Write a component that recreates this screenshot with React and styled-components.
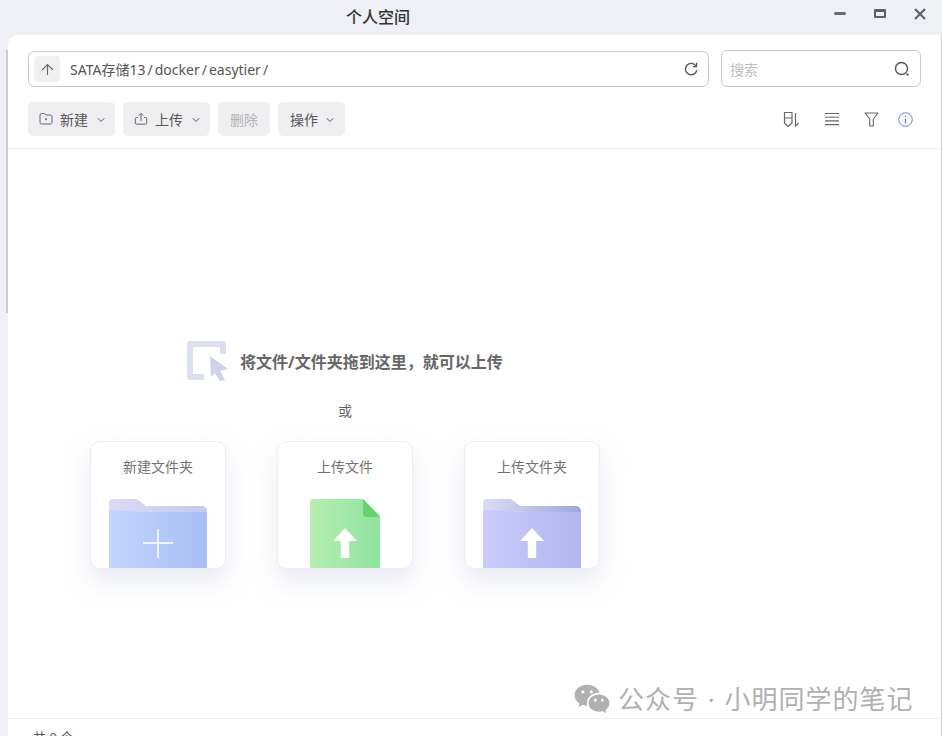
import React from 'react';
import styled, { createGlobalStyle } from 'styled-components';
import { ArrowUp, ChevronDown } from 'lucide-react';
import { RiWechatFill } from 'react-icons/ri';

const GlobalStyle = createGlobalStyle`
  html, body {
    margin: 0;
    padding: 0;
    background: #eef0f5;
    overflow: hidden;
  }
  * {
    box-sizing: border-box;
  }
`;

const Page = styled.div`
  position: relative;
  width: 942px;
  height: 736px;
  overflow: hidden;
  background: #eef0f5;
  font-family: "Noto Sans", "Noto Sans CJK SC", sans-serif;
  color: #555;
`;

const TitleBar = styled.div`
  display: flex;
  align-items: center;
  height: 35px;
  padding: 0 16px 4px 346px;
`;

const Title = styled.div`
  font-size: 16px;
  font-weight: 500;
  color: #333;
`;

const WindowControls = styled.div`
  display: flex;
  align-items: center;
  gap: 28px;
  margin-left: auto;
  margin-bottom: 4px;
`;

const Minimize = styled.span`
  width: 12px;
  height: 3px;
  border-radius: 2px;
  background: #666a72;
`;

const Maximize = styled.span`
  width: 12px;
  height: 9px;
  border: 2px solid #5c6068;
  border-top-width: 3px;
  border-radius: 1px;
`;

const EdgeScroll = styled.div`
  position: absolute;
  left: 6px;
  top: 50px;
  width: 2px;
  height: 263px;
  background: #cbccd1;
`;

const AppWindow = styled.div`
  display: flex;
  flex-direction: column;
  height: 701px;
  margin: 0 0 0 8px;
  background: #fff;
  border-top-left-radius: 10px;
  border-right: 1px solid #d4d4d8;
`;

const Header = styled.div`
  height: 114px;
  padding: 15px 20px 0;
  border-bottom: 1px solid #f0f0f2;
`;

const TopRow = styled.div`
  display: flex;
  align-items: center;
  gap: 12px;
`;

const AddressBar = styled.div`
  display: flex;
  align-items: center;
  width: 681px;
  height: 36px;
  padding: 0 10px 0 5px;
  border: 1px solid #c9cacd;
  border-radius: 6px;
  margin-top: 1px;
`;

const UpButton = styled.div`
  display: flex;
  align-items: center;
  justify-content: center;
  width: 26px;
  height: 26px;
  border-radius: 4px;
  background: #eff0f0;
  color: #666;
`;

const Path = styled.div`
  flex: 1;
  margin-left: 10px;
  font-size: 14px;
  word-spacing: -1.6px;
  color: #555;
`;

const SearchBox = styled.div`
  display: flex;
  align-items: center;
  justify-content: space-between;
  width: 200px;
  height: 37px;
  padding: 0 10px 0 8px;
  border: 1px solid #c9cacd;
  border-radius: 6px;
  font-size: 14px;
  color: #bdbdbd;
`;

const ActionRow = styled.div`
  display: flex;
  align-items: center;
  gap: 8px;
  margin-top: 15px;
`;

const ActionButton = styled.div`
  display: flex;
  align-items: center;
  gap: ${(p) => p.$gap}px;
  width: ${(p) => p.$width}px;
  height: 34px;
  padding-left: ${(p) => p.$pad}px;
  border-radius: 5px;
  background: #efeff1;
  font-size: 14px;
  color: ${(p) => (p.$disabled ? '#b4b4b6' : '#555')};
`;

const Caret = styled(ChevronDown)`
  margin-top: 2px;
  color: #444;
`;

const ViewTools = styled.div`
  display: flex;
  align-items: center;
  gap: 25px;
  margin-left: auto;
  margin-right: 8px;
`;

const InfoSvg = styled.svg`
  margin-left: -6px;
`;

const Empty = styled.div`
  flex: 1;
  width: 510px;
  margin-left: 82px;
  padding-top: 192px;
`;

const DropHint = styled.div`
  display: flex;
  align-items: center;
  gap: 12px;
  margin-left: 97px;
  font-size: 16px;
  font-weight: 700;
  color: #666;
`;

const OrText = styled.div`
  margin-top: 19px;
  text-align: center;
  font-size: 14px;
  color: #666;
`;

const CardRow = styled.div`
  display: flex;
  gap: 51px;
  margin-top: 21px;
`;

const Card = styled.div`
  display: flex;
  flex-direction: column;
  align-items: center;
  width: 136px;
  height: 128px;
  padding-top: 14px;
  border: 1px solid #eeeef2;
  border-radius: 10px;
  background: #fff;
  box-shadow: 0 12px 24px rgba(190, 198, 222, 0.36);
  overflow: hidden;
  font-size: 14px;
  color: #727272;
`;

const CardArt = styled.svg`
  display: block;
  margin-top: auto;
  margin-bottom: -1px;
`;

const Footer = styled.div`
  height: 18px;
  padding: 9px 0 0 25px;
  border-top: 1px solid #eeeef0;
  font-size: 13px;
  line-height: 18px;
  color: #555;
`;

const Watermark = styled.div`
  position: absolute;
  left: 573px;
  top: 680px;
  display: flex;
  align-items: center;
  gap: 7px;
  font-size: 26px;
  letter-spacing: 1px;
  word-spacing: 1px;
  line-height: 34px;
  color: #b0b0b0;
  white-space: nowrap;
`;

const CloseIcon = () => (
  <svg width="12" height="12" viewBox="0 0 12 12" fill="none" stroke="#5c6068" strokeWidth="2.1">
    <path d="M1 1 L11 11 M11 1 L1 11" />
  </svg>
);

const RefreshIcon = () => (
  <svg width="14" height="14" viewBox="0 0 14 14" fill="none" stroke="#555" strokeWidth="1.4">
    <path d="M12 4 A5.7 5.7 0 1 0 12.8 8" />
    <path d="M12.6 0.8 V4.6 H8.8" strokeWidth="1.2" />
  </svg>
);

const SearchIcon = () => (
  <svg width="16" height="16" viewBox="0 0 16 16" fill="none" stroke="#555" strokeWidth="1.4">
    <circle cx="7.5" cy="7.5" r="6" />
    <path d="M12.6 12.6 L14.4 14.4" strokeWidth="1.6" />
  </svg>
);

const NewFolderIcon = () => (
  <svg width="14" height="14" viewBox="0 0 14 14" fill="none" stroke="#666" strokeWidth="1">
    <path d="M1 3 a1.5 1.5 0 0 1 1.5-1.5 H5.5 L7 3 H11.5 A1.5 1.5 0 0 1 13 4.5 V10.5 A1.5 1.5 0 0 1 11.5 12 H2.5 A1.5 1.5 0 0 1 1 10.5 Z" />
    <path d="M7 6.2 V8.2 M6 7.2 H8" />
  </svg>
);

const UploadIcon = () => (
  <svg width="14" height="14" viewBox="0 0 14 14" fill="none" stroke="#666" strokeWidth="1">
    <path d="M4 5.5 H2.5 A1.2 1.2 0 0 0 1.3 6.7 V11 A1.2 1.2 0 0 0 2.5 12.2 H11.5 A1.2 1.2 0 0 0 12.7 11 V6.7 A1.2 1.2 0 0 0 11.5 5.5 H10" />
    <path d="M7 9 V1.5 M4.8 3.6 L7 1.4 L9.2 3.6" />
  </svg>
);

const SortIcon = () => (
  <svg width="17" height="17" viewBox="0 0 17 17" fill="none" stroke="#666" strokeWidth="1.2">
    <path d="M1.5 1.5 H9 V12 L5.2 15.5 L1.5 12 Z M1.5 7 H9" />
    <path d="M12.5 2 V15 L15.5 12" />
  </svg>
);

const ListIcon = () => (
  <svg width="14" height="14" viewBox="0 0 14 14" fill="none" stroke="#666" strokeWidth="1.1">
    <path d="M0 1.5 H14 M0 5.2 H14 M0 8.9 H14 M0 12.6 H14" />
  </svg>
);

const FilterIcon = () => (
  <svg width="15" height="15" viewBox="0 0 15 15" fill="none" stroke="#666" strokeWidth="1.1">
    <path d="M1 1 H14 L9.3 7 V14 H5.7 V7 Z" strokeLinejoin="round" />
  </svg>
);

const InfoIcon = () => (
  <InfoSvg width="15" height="15" viewBox="0 0 15 15" fill="none" stroke="#6f7fd8" strokeWidth="1">
    <circle cx="7.5" cy="7.5" r="6.8" />
    <path d="M7.5 6.5 V11.5" strokeWidth="1.4" />
    <circle cx="7.5" cy="4.3" r="0.8" fill="#6f7fd8" stroke="none" />
  </InfoSvg>
);

const DropIcon = () => (
  <svg width="41" height="40" viewBox="0 0 41 40">
    <path d="M3 0 H36 A3 3 0 0 1 39 3 V13 H33 V6 H6 V33 H17 V39 H3 A3 3 0 0 1 0 36 V3 A3 3 0 0 1 3 0 Z" fill="#dcdff0" />
    <path d="M23 15 L41 28 L33 30 L38 39 L33 40 L28 32 L24 36 Z" fill="#cfd2e8" />
  </svg>
);

const FolderArt = ({ id, tabFrom, tabTo, from, to, children }) => (
  <CardArt width="98" height="70" viewBox="0 0 98 70">
    <defs>
      <linearGradient id={`${id}-tab`} x1="0" x2="1" y1="0" y2="0">
        <stop offset="0" stopColor={tabFrom} />
        <stop offset="1" stopColor={tabTo} />
      </linearGradient>
      <linearGradient id={`${id}-body`} x1="0" x2="1" y1="0" y2="0">
        <stop offset="0" stopColor={from} />
        <stop offset="1" stopColor={to} />
      </linearGradient>
    </defs>
    <path d="M0 14 V4 A4 4 0 0 1 4 0 H27 A4 4 0 0 1 30 1.5 L37 7 H93 A5 5 0 0 1 98 12 V30 H0 Z" fill={`url(#${id}-tab)`} />
    <path d="M0 13 A2 2 0 0 1 2 11 L34 13 H98 V70 H0 Z" fill={`url(#${id}-body)`} />
    {children}
  </CardArt>
);

const WhiteArrow = ({ x }) => (
  <path d={`M${x} 29 L${x + 12} 42 H${x + 4.2} V59 H${x - 4.2} V42 H${x - 12} Z`} fill="#fff" />
);

const FileArt = () => (
  <CardArt width="70" height="70" viewBox="0 0 70 70">
    <defs>
      <linearGradient id="file-body" x1="0" x2="1" y1="0" y2="0">
        <stop offset="0" stopColor="#b6eeb0" />
        <stop offset="1" stopColor="#8fe3a2" />
      </linearGradient>
    </defs>
    <path d="M3 0 H53 L70 17 V70 H0 V3 A3 3 0 0 1 3 0 Z" fill="url(#file-body)" />
    <path d="M53 0 L70 18 H57 A4 4 0 0 1 53 14 Z" fill="#62d66c" />
    <WhiteArrow x={35} />
  </CardArt>
);

export default function App() {
  return (
    <Page>
      <GlobalStyle />
      <TitleBar>
        <Title>个人空间</Title>
        <WindowControls>
          <Minimize />
          <Maximize />
          <CloseIcon />
        </WindowControls>
      </TitleBar>
      <EdgeScroll />
      <AppWindow>
        <Header>
          <TopRow>
            <AddressBar>
              <UpButton>
                <ArrowUp size={17} strokeWidth={1.6} />
              </UpButton>
              <Path>SATA存储13 / docker / easytier /</Path>
              <RefreshIcon />
            </AddressBar>
            <SearchBox>
              搜索
              <SearchIcon />
            </SearchBox>
          </TopRow>
          <ActionRow>
            <ActionButton $width={87} $pad={11} $gap={7}>
              <NewFolderIcon />
              新建
              <Caret size={12} strokeWidth={1.8} />
            </ActionButton>
            <ActionButton $width={87} $pad={11} $gap={7}>
              <UploadIcon />
              上传
              <Caret size={12} strokeWidth={1.8} />
            </ActionButton>
            <ActionButton $width={52} $pad={12} $gap={0} $disabled>
              删除
            </ActionButton>
            <ActionButton $width={67} $pad={12} $gap={6}>
              操作
              <Caret size={12} strokeWidth={1.8} />
            </ActionButton>
            <ViewTools>
              <SortIcon />
              <ListIcon />
              <FilterIcon />
              <InfoIcon />
            </ViewTools>
          </ActionRow>
        </Header>
        <Empty>
          <DropHint>
            <DropIcon />
            将文件/文件夹拖到这里，就可以上传
          </DropHint>
          <OrText>或</OrText>
          <CardRow>
            <Card>
              新建文件夹
              <FolderArt id="create" tabFrom="#dcdaf2" tabTo="#c5c8f0" from="#c3d5fd" to="#a8bdf5">
                <path d="M49 30 V59 M34 44 H64" stroke="#fff" strokeWidth="1.6" />
              </FolderArt>
            </Card>
            <Card>
              上传文件
              <FileArt />
            </Card>
            <Card>
              上传文件夹
              <FolderArt id="upload" tabFrom="#dcdcf6" tabTo="#9fa7dc" from="#c9cbfa" to="#b2b6f2">
                <WhiteArrow x={49} />
              </FolderArt>
            </Card>
          </CardRow>
        </Empty>
        <Footer>共 0 个</Footer>
      </AppWindow>
      <Watermark>
        <RiWechatFill size={38} />
        公众号 · 小明同学的笔记
      </Watermark>
    </Page>
  );
}
